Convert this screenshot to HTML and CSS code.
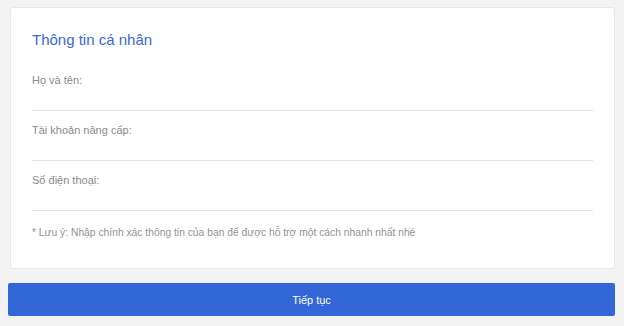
FILE: index.html
```html
<!DOCTYPE html>
<html lang="vi">
<head>
    <meta charset="UTF-8">
    <meta name="viewport" content="width=device-width, initial-scale=1.0">
    <title>Thông tin cá nhân</title>
    <link rel="stylesheet" href="styles.css">
</head>
<body>

<div class="page">
    <div class="card">
        <h2 class="card-title">Thông tin cá nhân</h2>
        <div class="field">
            <label for="fullname">Họ và tên:</label>
            <input type="text" id="fullname">
        </div>
        <div class="field">
            <label for="account">Tài khoản nâng cấp:</label>
            <input type="text" id="account">
        </div>
        <div class="field">
            <label for="phone">Số điện thoại:</label>
            <input type="text" id="phone">
        </div>
        <div class="note">* Lưu ý: Nhập chính xác thông tin của bạn để được hỗ trợ một cách nhanh nhất nhé</div>
    </div>
    <button class="submit">Tiếp tục</button>
</div>

</body>
</html>
```

FILE: styles.css
```css
body {
    font-family: "Liberation Sans", Arial, sans-serif;
    margin: 0;
    background-color: #f3f3f3;
}
.page {
    padding: 7px 9px 0 8px;
}
.card {
    margin-left: 2px;
    background-color: #fff;
    border: 1px solid #e8e8e8;
    border-radius: 3px;
    padding: 22px 21px 28px 21px;
}
.card-title {
    margin: 0 0 22px 0;
    font-size: 15px;
    line-height: 20px;
    font-weight: normal;
    color: #3b67d9;
}
.field {
    display: flex;
    flex-direction: column;
    margin-bottom: 11px;
}
.field label {
    font-size: 11px;
    line-height: 16px;
    color: #8a8a8a;
}
.field input {
    height: 22px;
    padding: 0;
    border: none;
    border-bottom: 1px solid #e4e4e4;
    outline: none;
    font-family: inherit;
    font-size: 12px;
}
.note {
    margin-top: 15px;
    font-size: 10.3px;
    line-height: 14px;
    color: #939393;
}
.submit {
    display: block;
    width: 100%;
    height: 33px;
    margin-top: 14px;
    border: none;
    border-radius: 2px;
    background-color: #3366d6;
    color: #fff;
    font-family: inherit;
    font-size: 11px;
}
```
